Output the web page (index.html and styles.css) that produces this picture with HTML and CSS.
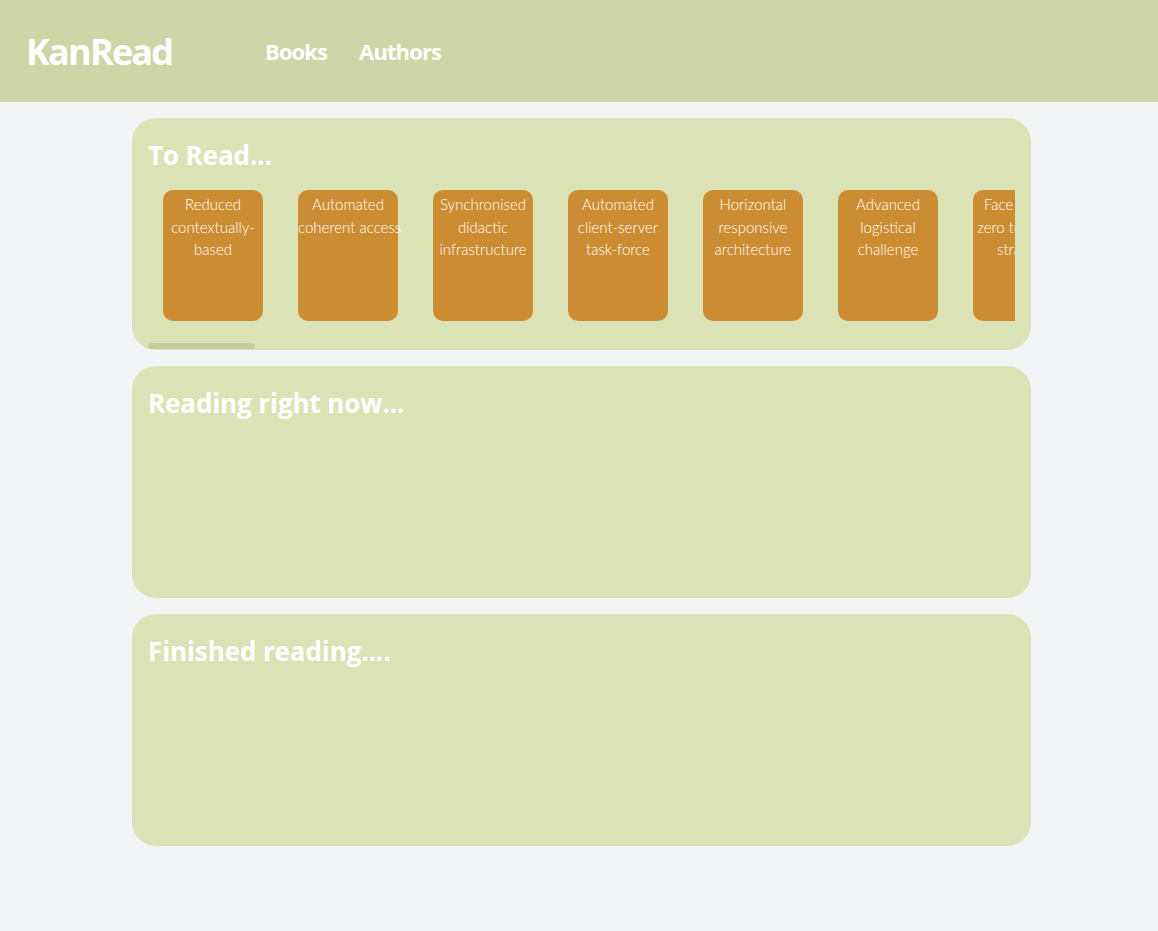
FILE: index.html
```html
<!DOCTYPE html>
<html lang="en">
<head>
<meta charset="utf-8">
<title>KanRead</title>
<link rel="stylesheet" href="styles.css">
</head>
<body>
<header class="topbar">
  <div class="logo">KanRead</div>
  <nav class="nav">
    <a class="nav-link" href="#">Books</a>
    <a class="nav-link" href="#">Authors</a>
  </nav>
</header>
<main class="board">
  <section class="lane">
    <h2 class="lane-title">To Read...</h2>
    <div class="lane-scroll">
      <div class="book">Reduced contextually-based</div>
      <div class="book">Automated coherent&nbsp;access</div>
      <div class="book">Synchronised didactic infrastructure</div>
      <div class="book">Automated client-server task-force</div>
      <div class="book">Horizontal responsive architecture</div>
      <div class="book">Advanced logistical challenge</div>
      <div class="book">Face to face zero tolerance strategy</div>
      <div class="book">Versatile systematic framework</div>
      <div class="book">Enhanced holistic hierarchy</div>
      <div class="book">Robust mobile interface</div>
      <div class="book">Open-source bifurcated matrix</div>
      <div class="book">Proactive next generation moratorium</div>
      <div class="book">Cross-platform static toolset</div>
      <div class="book">Fundamental dynamic paradigm</div>
      <div class="book">Persevering radical workforce</div>
      <div class="book">Streamlined tangible alliance</div>
      <div class="book">Optional optimal encoding</div>
      <div class="book">Innovative asymmetric approach</div>
      <div class="book">Managed global projection</div>
      <div class="book">Sharable scalable database</div>
      <div class="book">Integrated even-keeled throughput</div>
      <div class="book">Ergonomic modular function</div>
      <div class="book">Phased motivating capability</div>
      <div class="book">Reactive intangible groupware</div>
      <div class="book">Seamless empowering migration</div>
      <div class="book">Balanced discrete protocol</div>
      <div class="book">Quality-focused local hub</div>
      <div class="book">Devolved actuating knowledgebase</div>
      <div class="book">Universal exuding adapter</div>
      <div class="book">Multi-layered secondary support</div>
      <div class="book">Organic maximized firmware</div>
      <div class="book">Customizable fresh-thinking solution</div>
      <div class="book">Configurable didactic concept</div>
      <div class="book">Digitized attitude-oriented model</div>
      <div class="book">Expanded well-modulated orchestration</div>
      <div class="book">Focused tertiary extranet</div>
      <div class="book">Implemented heuristic initiative</div>
      <div class="book">Inverse regional installation</div>
      <div class="book">Monitored 24/7 emulation</div>
      <div class="book">Networked composite benchmark</div>
      <div class="book">Polarised user-facing instruction set</div>
      <div class="book">Realigned homogeneous algorithm</div>
      <div class="book">Re-engineered neutral definition</div>
      <div class="book">Self-enabling transitional portal</div>
      <div class="book">Stand-alone executive software</div>
      <div class="book">Switchable logical pricing structure</div>
      <div class="book">Total impactful info-mediaries</div>
      <div class="book">Upgradable foreground flexibility</div>
      <div class="book">User-centric clear-thinking access</div>
      <div class="book">Visionary dedicated service-desk</div>
      <div class="book">Virtual content-based forecast</div>
      <div class="book">Vision-oriented disintermediate hardware</div>
    </div>
    <div class="lane-track"><div class="lane-thumb"></div></div>
  </section>
  <section class="lane">
    <h2 class="lane-title">Reading right now...</h2>
  </section>
  <section class="lane">
    <h2 class="lane-title">Finished reading....</h2>
  </section>
</main>
</body>
</html>
```

FILE: styles.css
```css
* {
  box-sizing: border-box;
}

body {
  margin: 0;
  background: #f3f4f6;
  font-family: "Open Sans", "Noto Sans", sans-serif;
  color: #ffffff;
}

.topbar {
  height: 102px;
  background: #ced6a7;
  display: flex;
  align-items: center;
  padding-left: 26px;
}

.logo {
  width: 239px;
  font-size: 36px;
  font-weight: 700;
  color: #ffffff;
  letter-spacing: -1.8px;
}

.nav {
  display: flex;
  gap: 32px;
}

.nav-link {
  color: #ffffff;
  text-decoration: none;
  font-size: 22px;
  font-weight: 700;
  letter-spacing: -0.9px;
}

.board {
  width: 899px;
  margin-left: 132px;
  padding-top: 16px;
  display: flex;
  flex-direction: column;
  gap: 16px;
}

.lane {
  height: 232px;
  background: #dbe2b6;
  border-radius: 24px;
  padding: 16px 16px 0;
  overflow: hidden;
}

.lane-title {
  margin: 0;
  height: 56px;
  padding-top: 3px;
  font-size: 26px;
  line-height: 36px;
  font-weight: 700;
  color: #ffffff;
  letter-spacing: -0.1px;
}

.lane-scroll {
  display: flex;
  overflow-x: auto;
  scrollbar-width: none;
  height: 153px;
  padding-bottom: 22px;
  align-items: flex-start;
}

.lane-track {
  height: 7px;
}

.lane-thumb {
  width: 107px;
  height: 6px;
  background: #c5cd9f;
  border-radius: 3px;
}

.book {
  flex: 0 0 100px;
  width: 100px;
  height: 131px;
  margin: 0 20px 0 15px;
  padding-top: 3px;
  background: #cc8d32;
  border-radius: 10px;
  text-align: center;
  font-family: "Lato", "Open Sans", sans-serif;
  font-size: 15px;
  line-height: 22.5px;
  font-weight: 300;
  color: #ffffff;
}
```
